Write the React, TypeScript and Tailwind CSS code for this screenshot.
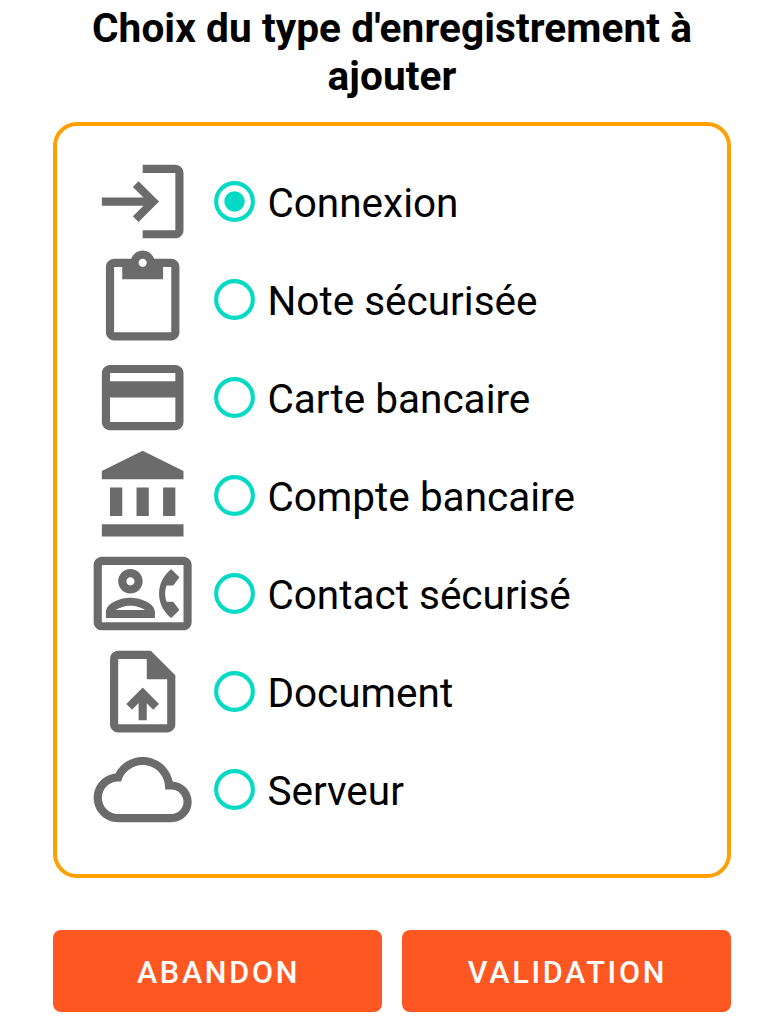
import React, { useState } from 'react';

interface RecordType {
    id: string;
    label: string;
    path: string;
}

const recordTypes: RecordType[] = [
    {
        id: 'login',
        label: 'Connexion',
        path: 'M11 7 9.6 8.4l2.6 2.6H2v2h10.2l-2.6 2.6L11 17l5-5-5-5zm9 12h-8v2h8c1.1 0 2-.9 2-2V5c0-1.1-.9-2-2-2h-8v2h8v14z',
    },
    {
        id: 'note',
        label: 'Note sécurisée',
        path: 'M19 2h-4.18C14.4.84 13.3 0 12 0c-1.3 0-2.4.84-2.82 2H5c-1.1 0-2 .9-2 2v16c0 1.1.9 2 2 2h14c1.1 0 2-.9 2-2V4c0-1.1-.9-2-2-2zm-7 0c.55 0 1 .45 1 1s-.45 1-1 1-1-.45-1-1 .45-1 1-1zm7 18H5V4h2v3h10V4h2v16z',
    },
    {
        id: 'card',
        label: 'Carte bancaire',
        path: 'M20 4H4c-1.11 0-1.99.89-1.99 2L2 18c0 1.11.89 2 2 2h16c1.11 0 2-.89 2-2V6c0-1.11-.89-2-2-2zm0 14H4v-6h16v6zm0-10H4V6h16v2z',
    },
    {
        id: 'bank',
        label: 'Compte bancaire',
        path: 'M4 10v7h3v-7H4zm6.5 0v7h3v-7h-3zM2 22h20v-3H2v3zm15-12v7h3v-7h-3zM12 1 2 6v2h20V6L12 1z',
    },
    {
        id: 'contact',
        label: 'Contact sécurisé',
        path: 'M22 3H2C.9 3 0 3.9 0 5v14c0 1.1.9 2 2 2h20c1.1 0 1.99-.9 1.99-2L24 5c0-1.1-.9-2-2-2zm0 16H2V5h20v14zm-2.99-1.01L21 16l-1.51-2h-1.64c-.22-.63-.35-1.3-.35-2s.13-1.37.35-2h1.64L21 8l-1.99-1.99c-1.31.98-2.28 2.37-2.73 3.99-.18.64-.28 1.31-.28 2s.1 1.36.28 2c.45 1.61 1.42 3.01 2.73 3.99zM9 12c1.65 0 3-1.35 3-3s-1.35-3-3-3-3 1.35-3 3 1.35 3 3 3zm0-4c.55 0 1 .45 1 1s-.45 1-1 1-1-.45-1-1 .45-1 1-1zm6 8.59c0-2.5-3.97-3.58-6-3.58s-6 1.08-6 3.58V18h12v-1.41zM5.48 16c.74-.5 2.22-1 3.52-1s2.77.49 3.52 1H5.48z',
    },
    {
        id: 'document',
        label: 'Document',
        path: 'M14 2H6c-1.1 0-1.99.9-1.99 2L4 20c0 1.1.89 2 1.99 2H18c1.1 0 2-.9 2-2V8l-6-6zm4 18H6V4h7v5h5v11zM8 15.01l1.41 1.41L11 14.84V19h2v-4.16l1.59 1.59L16 15.01 12.01 11z',
    },
    {
        id: 'server',
        label: 'Serveur',
        path: 'M19.35 10.04C18.67 6.59 15.64 4 12 4 9.11 4 6.61 5.64 5.36 8.04 2.35 8.36 0 10.9 0 14c0 3.31 2.69 6 6 6h13c2.76 0 5-2.24 5-5 0-2.64-2.05-4.78-4.65-4.96zM19 18H6c-2.21 0-4-1.79-4-4s1.79-4 4-4h.71C7.37 7.69 9.48 6 12 6c3.04 0 5.5 2.46 5.5 5.5v.5H19c1.66 0 3 1.34 3 3s-1.34 3-3 3z',
    },
];

const RadioMark: React.FC<{ checked: boolean }> = ({ checked }) => (
    <svg viewBox="0 0 24 24" className="ml-[18px] size-[49px] shrink-0">
        <circle cx="12" cy="12" r="9" fill="none" stroke="#03dac5" strokeWidth="2" />
        {checked && <circle cx="12" cy="12" r="5" fill="#03dac5" />}
    </svg>
);

const App: React.FC = () => {
    const [selected, setSelected] = useState('login');

    return (
        <div className="flex h-screen flex-col overflow-hidden bg-white px-[53px] pt-1 font-['Roboto',sans-serif] text-black">
            <h1 className="text-center text-[40.6px] leading-[48px] font-bold tracking-[0.07px]">
                Choix du type d'enregistrement à ajouter
            </h1>

            {/* Record types */}
            <div role="radiogroup" className="mt-[22px] h-[756px] rounded-[24px] border-4 border-[#ffa000] pt-[26.5px] pl-[36.6px]">
                {recordTypes.map((type) => (
                    <button
                        key={type.id}
                        type="button"
                        role="radio"
                        aria-checked={selected === type.id}
                        onClick={() => setSelected(type.id)}
                        className="flex h-[98px] w-full items-center text-left"
                    >
                        <svg viewBox="0.08 0.1 24 24" className="size-[98px] shrink-0 overflow-visible" fill="#6b6b6b">
                            <path d={type.path} />
                        </svg>
                        <RadioMark checked={selected === type.id} />
                        <span className="pt-[3px] pl-[8.8px] text-[40.5px] leading-[48px]">{type.label}</span>
                    </button>
                ))}
            </div>

            {/* Actions */}
            <div className="mt-[52.3px] flex gap-5">
                <button type="button" className="h-[82px] flex-1 rounded-lg bg-[#ff5722] pt-1 pl-[2px] text-[30.6px] font-medium tracking-[2.7px] text-white">
                    ABANDON
                </button>
                <button type="button" className="h-[82px] flex-1 rounded-lg bg-[#ff5722] pt-1 pl-[2px] text-[30.6px] font-medium tracking-[2.7px] text-white">
                    VALIDATION
                </button>
            </div>
        </div>
    );
};

export default App;
